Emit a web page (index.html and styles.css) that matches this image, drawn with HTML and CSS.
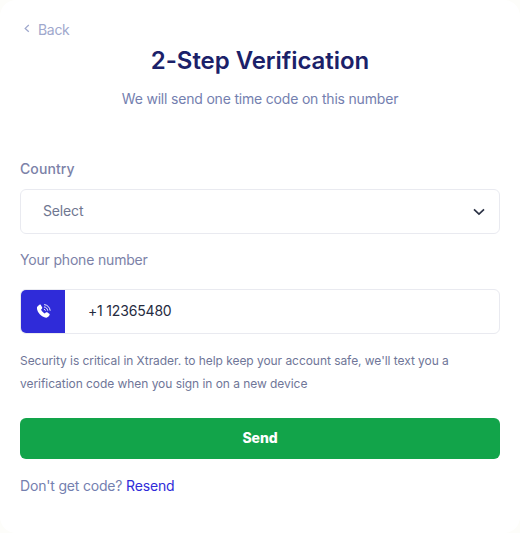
FILE: index.html
```html
<!DOCTYPE html>
<html lang="en">
<head>
<meta charset="utf-8">
<title>2-Step Verification</title>
<link rel="stylesheet" href="styles.css">
</head>
<body>
<main class="card">
  <a class="back" href="#">
    <svg class="back-icon" viewBox="0 0 8 10" width="8" height="10" aria-hidden="true"><path d="M5.800 1 2.200 4.400l3.600 3.400" fill="none" stroke="currentColor" stroke-width="1.300"/></svg>
    <span>Back</span>
  </a>
  <h1 class="title">2-Step Verification</h1>
  <p class="subtitle">We will send one time code on this number</p>

  <div class="label label-strong">Country</div>
  <div class="field select">
    <span class="field-text">Select</span>
    <svg viewBox="0 0 12 8" width="12" height="8" aria-hidden="true"><path d="M1 1.300 6 6l5-4.700" fill="none" stroke="#2b3245" stroke-width="1.700"/></svg>
  </div>

  <div class="label label-phone">Your phone number</div>
  <div class="field phone">
    <span class="phone-icon">
      <svg viewBox="0 0 16 16" width="17" height="17" aria-hidden="true">
        <path d="M4.200 1.600c.5-.3 1-.2 1.300.3l1.200 2c.3.5.2 1-.2 1.400l-.8.7c.6 1.600 1.900 3 3.600 3.800l.8-.8c.4-.4.9-.5 1.400-.2l1.900 1.200c.5.3.6.9.3 1.400-.7 1.300-1.900 2.600-3.200 2.400C6 13.200 1.900 8.700 1.800 4.700c0-1.200 1.200-2.400 2.400-3.100z" fill="#fff"/>
        <path d="M8.600 1.500c3 .2 5.400 2.600 5.700 5.700M8.500 3.700c1.900.1 3.300 1.600 3.500 3.500M8.400 5.800c.7.1 1.300.7 1.400 1.400" fill="none" stroke="#fff" stroke-width=".9"/>
      </svg>
    </span>
    <span class="phone-number field-text">+1 12365480</span>
  </div>

  <p class="help">Security is critical in Xtrader. to help keep your account safe, we'll text you a verification code when you sign in on a new device</p>

  <button class="send" type="button">Send</button>

  <p class="resend">Don't get code? <a href="#">Resend</a></p>
</main>
</body>
</html>
```
FILE: styles.css
```css
* { box-sizing: border-box; }
html, body { margin: 0; height: 100%; }
body {
  background: #fdfdfa;
  font-family: "Inter", "Liberation Sans", sans-serif;
  color: #7a80ab;
}
.card {
  height: 533px;
  background: #fff;
  border-radius: 16px;
  padding: 20px 20px 0;
  overflow: hidden;
}
.back {
  display: flex;
  align-items: flex-start;
  gap: 7px;
  height: 20px;
  padding-left: 3px;
  color: #9fa8cd;
  font-size: 14px;
  line-height: 20px;
  letter-spacing: -0.3px;
  text-decoration: none;
}
.back-icon { margin-top: 4px; }
.title {
  margin: 9px 0 0;
  text-align: center;
  font-size: 24px;
  line-height: 24px;
  font-weight: 600;
  letter-spacing: -0.05px;
  color: #1b2169;
}
.subtitle {
  margin: 16px 0 0;
  text-align: center;
  font-size: 14px;
  line-height: 20px;
  letter-spacing: -0.19px;
  color: #7480af;
}
.label {
  font-size: 14px;
  line-height: 20px;
  color: #7c82a8;
}
.label-strong { margin-top: 50px; font-weight: 500; letter-spacing: 0.1px; }
.label-phone { margin-top: 16px; letter-spacing: -0.18px; }
.field {
  display: flex;
  align-items: center;
  width: 480px;
  height: 45px;
  background: #fff;
  border: 1px solid #e9eaf0;
  border-radius: 6px;
}
.field-text { padding-bottom: 2px; }
.select {
  margin-top: 10px;
  justify-content: space-between;
  padding: 0 14px 0 22px;
  font-size: 14px;
  letter-spacing: -0.15px;
  color: #6f7791;
}
.phone { margin-top: 19px; overflow: hidden; }
.phone-icon {
  display: flex;
  align-items: center;
  justify-content: center;
  width: 44px;
  height: 100%;
  background: #2f2bd9;
}
.phone-number {
  margin-left: 23px;
  font-size: 14px;
  letter-spacing: -0.18px;
  color: #262b3f;
}
.help {
  margin: 15px 0 0;
  font-size: 12px;
  line-height: 23px;
  letter-spacing: -0.05px;
  color: #6f7698;
}
.send {
  display: block;
  width: 480px;
  height: 41px;
  margin-top: 23px;
  padding: 0 0 2px;
  border: 0;
  border-radius: 6px;
  background: #12a44a;
  color: #fff;
  font: 800 14px "Inter", "Liberation Sans", sans-serif;
  letter-spacing: -0.1px;
}
.resend {
  margin: 17px 0 0;
  font-size: 14px;
  line-height: 20px;
  letter-spacing: -0.18px;
  color: #7480af;
}
.resend a { color: #2f2bd9; text-decoration: none; }
```
